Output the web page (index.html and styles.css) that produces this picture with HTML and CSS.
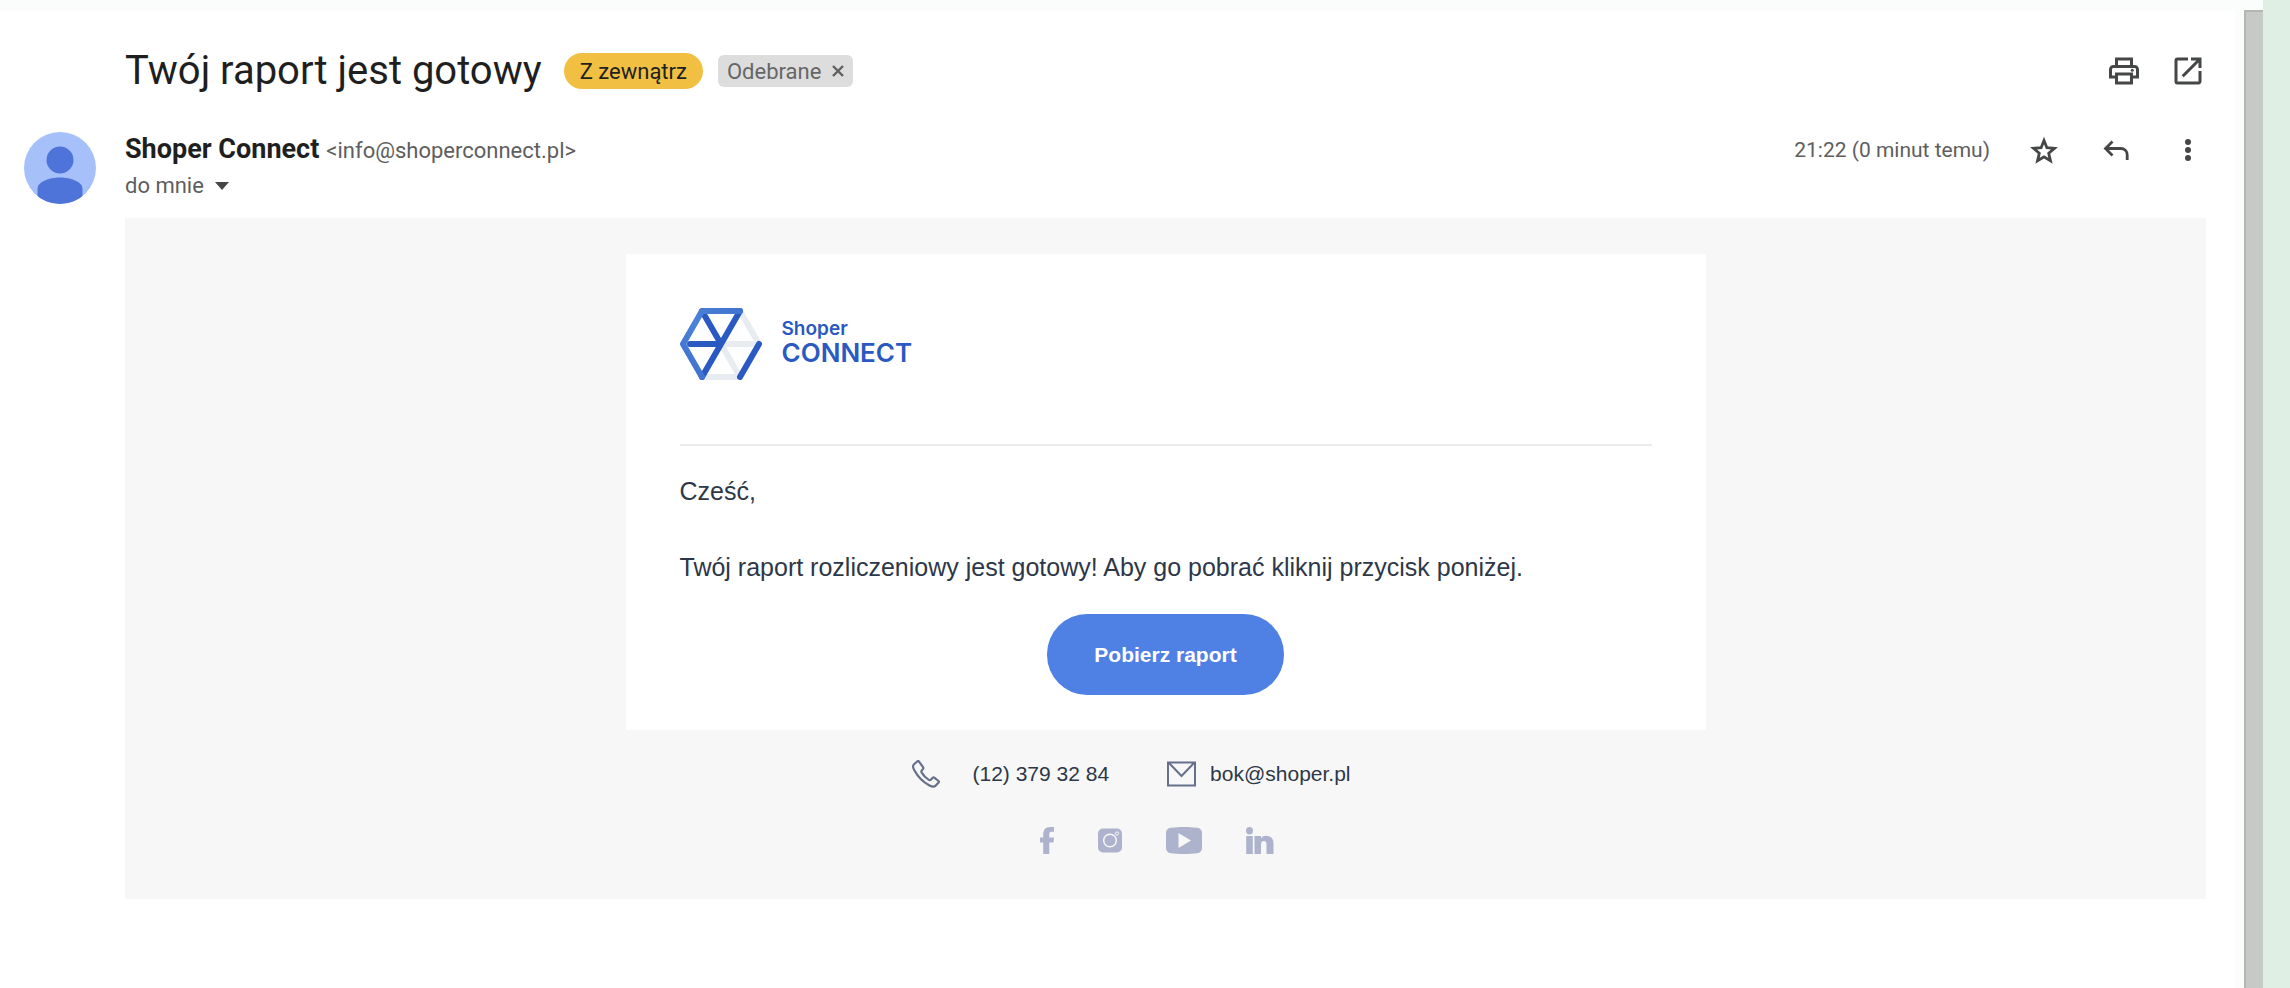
FILE: index.html
```html
<!DOCTYPE html>
<html lang="pl">
<head>
    <meta charset="UTF-8">
    <meta name="viewport" content="width=device-width, initial-scale=1.0">
    <title>Twój raport jest gotowy</title>
    <link rel="stylesheet" href="styles.css">
</head>
<body>
    <main class="mail">
        <header class="subject">
            <h1>Twój raport jest gotowy</h1>
            <span class="chip chip-external">Z zewnątrz</span>
            <span class="chip chip-label">Odebrane
                <button class="chip-close" aria-label="Usuń etykietę">
                    <svg width="12" height="12" viewBox="0 0 12 12"><path d="M1 1l10 10M11 1L1 11" stroke="#5f6060" stroke-width="2.4"/></svg>
                </button>
            </span>
            <div class="actions subject-actions">
                <button class="icon-btn" aria-label="Drukuj wszystko">
                    <svg width="36" height="36" viewBox="0 0 24 24" fill="#444746"><path d="M19 8h-1V3H6v5H5c-1.660 0-3 1.340-3 3v6h4v4h12v-4h4v-6c0-1.660-1.340-3-3-3zM8 5h8v3H8V5zm8 12v2H8v-4h8v2zm2-2v-2H6v2H4v-4c0-.55.45-1 1-1h14c.55 0 1 .45 1 1v4h-2z"/><circle cx="17.500" cy="11.500" r="1"/></svg>
                </button>
                <button class="icon-btn" aria-label="W nowym oknie">
                    <svg width="36" height="36" viewBox="0 0 24 24" fill="#444746"><path d="M19 19H5V5h7V3H5a2 2 0 0 0-2 2v14a2 2 0 0 0 2 2h14c1.100 0 2-.9 2-2v-7h-2v7zM14 3v2h3.590l-9.830 9.830 1.410 1.410L19 6.410V10h2V3h-7z"/></svg>
                </button>
            </div>
        </header>

        <section class="message">
            <svg class="avatar" viewBox="0 0 72 72" role="img" aria-label="Shoper Connect">
                <defs><clipPath id="avatar-clip"><circle cx="36" cy="36" r="36"/></clipPath></defs>
                <g clip-path="url(#avatar-clip)">
                    <rect width="72" height="72" fill="#a6c1fa"/>
                    <circle cx="36" cy="28" r="13.500" fill="#4e73d9"/>
                    <path d="M13.500 72V57c0-7 11-11.500 22.500-11.500S58.500 50 58.500 57v15z" fill="#4e73d9"/>
                </g>
            </svg>
            <div class="sender">
                <div class="from">
                    <span class="name">Shoper Connect</span>
                    <span class="address">&lt;info@shoperconnect.pl&gt;</span>
                </div>
                <button class="recipient">do mnie
                    <svg width="14" height="8" viewBox="0 0 14 8"><path d="M0 0h14L7 8z" fill="#444746"/></svg>
                </button>
            </div>
            <div class="actions message-actions">
                <span class="time">21:22 (0 minut temu)</span>
                <button class="icon-btn" aria-label="Oznacz gwiazdką">
                    <svg width="32" height="32" viewBox="0 0 32 32" fill="none" stroke="#444746" stroke-width="2.800"><path d="M16 6.500l2.900 7.200 7.600.6-5.800 5 1.800 7.500L16 22.800l-6.500 4 1.800-7.500-5.800-5 7.600-.6z"/></svg>
                </button>
                <button class="icon-btn" aria-label="Odpowiedz">
                    <svg width="32" height="32" viewBox="0 0 32 32" fill="none" stroke="#444746" stroke-width="2.800"><path d="M12.500 7.500L5.500 14.500l7 7M5.500 14.500h15c4.500 0 6.700 3 6.700 6.500V26"/></svg>
                </button>
                <button class="icon-btn" aria-label="Więcej">
                    <svg width="32" height="32" viewBox="0 0 32 32" fill="#444746"><circle cx="16" cy="8" r="3"/><circle cx="16" cy="16" r="3"/><circle cx="16" cy="24" r="3"/></svg>
                </button>
            </div>

            <div class="content">
                <article class="card">
                    <div class="logo">
                        <svg width="82" height="72" viewBox="0 0 82 72" fill="none" stroke-width="6" stroke-linecap="round" stroke-linejoin="round">
                            <defs>
                                <linearGradient id="logo-edge" x1="0" y1="1" x2="1" y2="0">
                                    <stop offset="0" stop-color="#3c6ecb"/>
                                    <stop offset=".5" stop-color="#4c82d9"/>
                                    <stop offset="1" stop-color="#4074cf"/>
                                </linearGradient>
                            </defs>
                            <path d="M60 3l19 33H41l19 33H22" stroke="#e8ecf0"/>
                            <path d="M22 3l19 33M10 36h31M60 3L22 69M79 36L60 69" stroke="#2959c1"/>
                            <path d="M60 3H22L3 36l19 33" stroke="url(#logo-edge)"/>
                        </svg>
                        <div class="logo-text">
                            <span class="logo-small">Shoper</span>
                            <span class="logo-big">CONNECT</span>
                        </div>
                    </div>
                    <hr>
                    <p>Cześć,</p>
                    <p>Twój raport rozliczeniowy jest gotowy! Aby go pobrać kliknij przycisk poniżej.</p>
                    <a class="download" href="#">Pobierz raport</a>
                </article>

                <div class="contact">
                    <a class="phone" href="tel:+48123793284">
                        <svg width="28" height="28" viewBox="0 0 28 28" fill="none" stroke="#66708c" stroke-width="2.200" stroke-linejoin="round"><path d="M5.500 1.200L1.800 4.500C.8 5.500 1 8 2.500 10.500 6 17 11 22 17.500 25.500c2.500 1.300 4.800 1.400 5.800.4l3.300-3.500c.5-.6.4-1-.1-1.400l-4.200-3.300c-.5-.4-1.200-.3-1.600.1l-1.700 1.800c-.8.7-1.500.6-2.500 0-2.800-1.800-5.200-4.300-6.800-7-.5-.9-.5-1.500.1-2.200l1.300-1.500c.4-.5.4-1 .1-1.500L6.800 1.300c-.3-.5-.8-.5-1.300-.1z"/></svg>
                        (12) 379 32 84
                    </a>
                    <a class="email" href="mailto:bok@shoper.pl">
                        <svg width="29" height="26" viewBox="0 0 29 26" fill="none" stroke="#66708c" stroke-width="2"><path d="M1 1.500h27v23H1zM2 2l12.500 13L27 2"/></svg>
                        bok@shoper.pl
                    </a>
                </div>

                <nav class="social">
                    <a href="#" aria-label="Facebook">
                        <svg width="14" height="27" viewBox="0 0 14 27" fill="#adb3cd"><path d="M3.200 27V15.500H0V10.500h3.200V7.500C3.200 3 5.500 0 9.800 0H14v4.800h-2.500c-1.500 0-2.200.8-2.200 2.200v3.500H14l-.5 5H9.300V27z"/></svg>
                    </a>
                    <a href="#" aria-label="Instagram">
                        <svg width="24" height="27" viewBox="0 0 24 27"><rect y="1.500" width="24" height="24" rx="5" fill="#adb3cd"/><g fill="none" stroke="#f7f7f7"><circle cx="12" cy="13.500" r="6.300" stroke-width="1.500"/><circle cx="19" cy="6.500" r="1.600"/></g></svg>
                    </a>
                    <a href="#" aria-label="YouTube">
                        <svg width="36" height="27" viewBox="0 0 36 27"><path d="M5 .8C13-.2 23-.2 31 .8c3.500.4 5 2.200 5 5.700v14c0 3.500-1.500 5.300-5 5.700-8 1-18 1-26 0-3.500-.4-5-2.200-5-5.700v-14C0 3 1.500 1.200 5 .8z" fill="#adb3cd"/><path d="M12.500 6v15L25 13.500z" fill="#f7f7f7"/></svg>
                    </a>
                    <a href="#" aria-label="LinkedIn">
                        <svg width="28" height="27" viewBox="0 0 28 27" fill="#adb3cd"><ellipse cx="3.500" cy="3.700" rx="3.500" ry="3.700"/><path d="M.2 9h6.600v18H.2zM8.500 9h6.500v2.200C16 9.500 17.800 8.700 20 8.700c5 0 7.500 3 7.500 8V27h-7v-9c0-2.500-.7-4-2.700-4s-2.800 1.500-2.800 4v9H8.500z"/></svg>
                    </a>
                </nav>
            </div>
        </section>
    </main>
    <div class="scrollbar"></div>
    <aside class="side-panel"></aside>
</body>
</html>
```

FILE: styles.css
```css
* {
    box-sizing: border-box;
}

body {
    display: flex;
    margin: 0;
    min-height: 100vh;
    background: #fafdfb;
    color: #1f1f1f;
    font-family: Roboto, "Liberation Sans", sans-serif;
    font-size: 22px;
}

button {
    padding: 0;
    border: none;
    background: none;
    color: inherit;
    font: inherit;
    cursor: pointer;
}

svg {
    display: block;
    flex-shrink: 0;
}

.mail {
    flex: 1;
    margin-top: 10px;
    margin-right: 9px;
    padding: 34px 29px 0 24px;
    background: #fff;
}

.scrollbar {
    width: 19px;
    margin-top: 10px;
    border-top: 2px solid #b3b6b3;
    border-left: 2px solid #b3b6b3;
    background: #c7c9c6;
}

.side-panel {
    width: 27px;
    background: #dfefe3;
}

/* Subject line */
.subject {
    display: flex;
    align-items: center;
    height: 54px;
    padding-left: 101px;
}

h1 {
    margin: 0 22px 0 0;
    font-size: 40px;
    font-weight: 400;
    line-height: 48px;
}

.chip {
    display: flex;
    align-items: center;
    white-space: nowrap;
}

.chip-external {
    height: 36px;
    margin-right: 15px;
    padding: 0 16px;
    border-radius: 18px;
    background: #f1bf42;
}

.chip-label {
    gap: 11px;
    height: 32px;
    padding: 0 9px;
    border-radius: 6px;
    background: #ddd;
    color: #666;
}

.actions {
    display: flex;
    align-items: center;
    margin-left: auto;
}

.icon-btn {
    display: flex;
    align-items: center;
    justify-content: center;
    width: 36px;
    height: 36px;
}

.subject-actions {
    gap: 28px;
}

/* Sender row */
.message {
    display: grid;
    grid-template-columns: 72px 1fr auto;
    column-gap: 29px;
    padding-top: 34px;
}

.avatar {
    width: 72px;
    height: 72px;
}

.from {
    display: flex;
    align-items: baseline;
    gap: 7px;
    height: 36px;
    line-height: 34px;
}

.name {
    font-size: 27px;
    font-weight: 700;
}

.address,
.recipient,
.time {
    color: #5e5e5e;
}

.time {
    font-size: 21px;
}

.recipient {
    display: flex;
    align-items: center;
    gap: 11px;
    line-height: 36px;
}

.message-actions {
    gap: 36px;
    height: 36px;
}

/* Message body */
.content {
    grid-column: 2 / -1;
    margin-top: 14px;
    padding: 36px 0 45px;
    background: #f7f7f7;
    color: #2d3748;
    font-family: "Liberation Sans", Arial, sans-serif;
}

.card {
    max-width: 1080px;
    margin: 0 auto;
    padding: 54px 54px 35px;
    background: #fff;
    font-size: 25px;
    line-height: 38px;
}

.logo {
    display: flex;
    align-items: center;
    gap: 20px;
    color: #2959c1;
    font-family: Inter, sans-serif;
}

.logo-text {
    display: flex;
    flex-direction: column;
    padding-bottom: 6px;
    font-weight: 600;
    line-height: 24px;
}

.logo-small {
    font-size: 19px;
}

.logo-big {
    font-size: 26px;
}

hr {
    margin: 64px 0 26px;
    border: none;
    border-top: 2px solid #eaebec;
}

.card p {
    margin: 0 0 38px;
}

.card p:last-of-type {
    margin-bottom: 28px;
}

.download {
    display: block;
    width: fit-content;
    margin: 0 auto;
    padding: 0 47px;
    border-radius: 40px;
    background: #4f81e5;
    color: #fff;
    font-size: 21px;
    font-weight: 700;
    line-height: 81px;
    text-decoration: none;
}

.contact {
    display: flex;
    justify-content: center;
    gap: 58px;
    margin-top: 29px;
    padding-right: 68px;
    font-size: 21px;
    line-height: 30px;
}

.contact a {
    display: flex;
    align-items: center;
    color: inherit;
    text-decoration: none;
}

.phone {
    gap: 32px;
}

.email {
    gap: 14px;
}

.social {
    display: flex;
    justify-content: center;
    gap: 44px;
    margin-top: 38px;
    padding-right: 18px;
}
```
